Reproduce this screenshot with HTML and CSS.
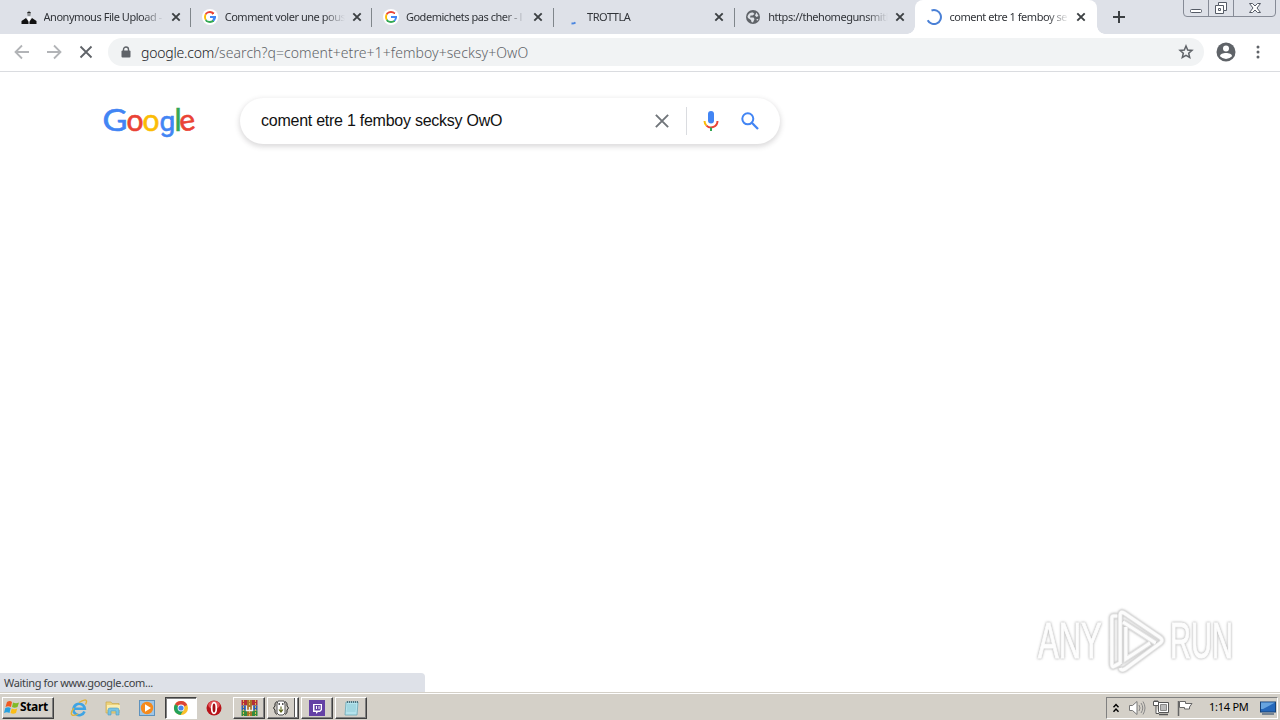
FILE: index.html
```html
<!DOCTYPE html>
<html lang="en">
<head>
    <meta charset="UTF-8">
    <meta name="viewport" content="width=device-width, initial-scale=1.0">
    <title>coment etre 1 femboy secksy OwO</title>
    <link rel="stylesheet" href="styles.css">
</head>
<body>
    <svg class="defs" width="0" height="0">
        <symbol id="close" viewBox="0 0 10 10"><path d="M1.3 1.3 8.7 8.7M8.7 1.3 1.3 8.7" stroke="currentColor" stroke-width="1.9" fill="none"/></symbol>
        <symbol id="arrow" viewBox="0 0 16 16"><path d="M15 8H2M8 1.5 1.5 8 8 14.5" stroke="currentColor" stroke-width="1.8" fill="none"/></symbol>
    </svg>

    <!-- Tab strip -->
    <div class="tabs">
        <div class="tab">
            <svg class="favicon" viewBox="0 0 16 16"><path d="M8 1.5l2 2.2-.6 3.3H6.6L6 3.7z" fill="#8b8e90"/><path d="M6.5 3h3v1h-3z" fill="#222"/><path d="M.5 15v-3L5 9l2.500 3.500V15zM15.500 15v-3L11 9l-2.500 3.500V15z" fill="#111"/><path d="M6 8l2 5 2-5z" fill="#fff"/></svg>
            <span class="title">Anonymous File Upload -</span>
            <svg class="close"><use href="#close"/></svg>
        </div>
        <div class="tab">
            <span class="favicon g-icon"><i></i></span>
            <span class="title">Comment voler une pous</span>
            <svg class="close"><use href="#close"/></svg>
        </div>
        <div class="tab">
            <span class="favicon g-icon"><i></i></span>
            <span class="title">Godemichets pas cher - l</span>
            <svg class="close"><use href="#close"/></svg>
        </div>
        <div class="tab">
            <svg class="favicon" viewBox="0 0 16 16"><path d="M7.500 14.500Q10 14.500 11.500 13.500" stroke="#4a86e0" stroke-width="2" fill="none"/></svg>
            <span class="title">TROTTLA</span>
            <svg class="close"><use href="#close"/></svg>
        </div>
        <div class="tab last">
            <svg class="favicon" viewBox="0 0 16 16"><circle cx="8" cy="8" r="7" fill="#5f6368"/><path d="M2.500 7.500Q4 3 8 3.500L9.500 5 7.500 6.500H5.500l-.5 2h3.500l1 1.500-1.500 3.500Q6 13.500 6 11L3 9zM11.500 3.500l2 3.500-2 1-1.500-1.500zM11.500 10h2l-1.500 2z" fill="#dee1e6"/></svg>
            <span class="title">https://thehomegunsmitl</span>
            <svg class="close"><use href="#close"/></svg>
        </div>
        <div class="tab active">
            <svg class="favicon" viewBox="0 0 16 16"><path d="M5.500 1.500A7 7 0 1 1 1.700 11.200" stroke="#4a80d6" stroke-width="2" fill="none"/></svg>
            <span class="title">coment etre 1 femboy se</span>
            <svg class="close"><use href="#close"/></svg>
        </div>
        <svg class="new-tab" viewBox="0 0 12 12"><path d="M6 0v12M0 6h12" stroke="#3c4043" stroke-width="2"/></svg>
        <div class="controls">
            <span><svg width="14" height="14"><rect x="1.500" y="8.500" width="11" height="3" rx="1" fill="#fff" stroke="#555b66"/></svg></span>
            <span><svg width="14" height="14"><path d="M4.500 1.500h8v8h-3v3h-8v-8h3z" fill="#fff" stroke="#555b66"/><path d="M4.500 4.500h5v5M4.500 7.500h2v2h-2z" fill="none" stroke="#555b66"/></svg></span>
            <span><svg width="14" height="14"><path d="M1.500 2.500h3L7 5l2.500-2.500h3L9 7l3.500 4.500h-3L7 9l-2.500 2.500h-3L5 7z" fill="#fff" stroke="#555b66"/></svg></span>
        </div>
    </div>

    <!-- Address bar -->
    <div class="toolbar">
        <svg class="nav"><use href="#arrow"/></svg>
        <svg class="nav forward"><use href="#arrow"/></svg>
        <svg class="nav stop" viewBox="0 0 16 16"><path d="M2.500 2.500l11 11M13.500 2.500l-11 11" stroke="#5f6368" stroke-width="1.800"/></svg>
        <div class="omnibox">
            <svg class="lock" viewBox="0 0 10 12"><path d="M2.500 5V3.500a2.500 2.500 0 0 1 5 0V5" stroke="#5f6368" stroke-width="1.400" fill="none"/><rect x=".5" y="4.500" width="9" height="7" rx="1" fill="#5f6368"/></svg>
            <div class="url"><b>google.com</b>/search?q=coment+etre+1+femboy+secksy+OwO</div>
            <svg class="star" viewBox="0 0 16 16"><path d="M8 2l1.700 4 4.300.4-3.300 2.900 1 4.200L8 11.300l-3.700 2.200 1-4.200L2 6.400 6.300 6z" fill="none" stroke="#5f6368" stroke-width="1.500"/></svg>
        </div>
        <svg class="profile" viewBox="0 0 20 20"><circle cx="10" cy="10" r="9.500" fill="#5f6368"/><circle cx="10" cy="6.500" r="3" fill="#fff"/><path d="M4 14.200C4 10 16 10 16 14.200Q10 20 4 14.200z" fill="#fff"/></svg>
        <svg class="dots" viewBox="0 0 4 14"><circle cx="2" cy="2" r="1.500"/><circle cx="2" cy="7" r="1.500"/><circle cx="2" cy="12" r="1.500"/></svg>
    </div>

    <!-- Page -->
    <div class="page">
        <svg class="logo" width="92" height="36" viewBox="0 0 92 36">
            <text class="big" x="-1.500" y="28.500" fill="#4285f4" stroke="#4285f4" textLength="25" lengthAdjust="spacingAndGlyphs">G</text>
            <text x="22.500" y="28.500" fill="#ea4335" stroke="#ea4335">o</text>
            <text x="38.500" y="28.500" fill="#fbbc05" stroke="#fbbc05">o</text>
            <text class="gee" x="55.500" y="28.500" fill="#4285f4" stroke="#4285f4">g</text>
            <text x="70.500" y="28.500" fill="#34a853" stroke="#34a853">l</text>
            <text x="75.500" y="28.500" fill="#ea4335" stroke="#ea4335" transform="rotate(-8 83 21)">e</text>
        </svg>
        <div class="search">
            <span class="query">coment etre 1 femboy secksy OwO</span>
            <svg class="clear" viewBox="0 0 16 16"><path d="M1 1l14 14M15 1L1 15" stroke="#70757a" stroke-width="2.200"/></svg>
            <svg class="mic" viewBox="0 0 16 20"><rect x="5" y="0" width="6" height="12.500" rx="3" fill="#4285f4"/><path d="M1.500 10a6.500 6.500 0 0 0 2 4.600" stroke="#fbbc05" stroke-width="2" fill="none"/><path d="M3.500 14.600A6.500 6.500 0 0 0 14.500 10" stroke="#ea4335" stroke-width="2" fill="none"/><path d="M8 16.500V20" stroke="#34a853" stroke-width="2"/></svg>
            <svg class="glass" viewBox="0 0 18 18"><circle cx="6.800" cy="6.800" r="5.500" fill="none" stroke="#4285f4" stroke-width="2"/><path d="M10.800 10.800l6.200 6.200" stroke="#4285f4" stroke-width="2.300"/></svg>
        </div>
    </div>

    <div class="watermark">
        <span>ANY</span>
        <svg width="56" height="64" viewBox="0 0 60 64" preserveAspectRatio="none"><path d="M9 7H5q-2 0-2 2v46q0 4 3 2l6-3M12 55V6q0-4 4-2l38 24q5 3 1 6L17 60q-4 2-5-1M15 13l35 21M18 18v32l26-16" fill="none" stroke="#e4e4e4" stroke-width="5"/><path d="M9 7H5q-2 0-2 2v46q0 4 3 2l6-3M12 55V6q0-4 4-2l38 24q5 3 1 6L17 60q-4 2-5-1M15 13l35 21M18 18v32l26-16" fill="none" stroke="#fcfcfc" stroke-width="3.200"/></svg>
        <span class="run">RUN</span>
    </div>
    <div class="status">Waiting for www.google.com...</div>

    <!-- Taskbar -->
    <div class="taskbar">
        <div class="start">
            <svg width="18" height="16" viewBox="0 0 18 16"><path d="M4 2q3-2 5 0L8 7q-3-1.500-5.500 0z" fill="#f05a22"/><path d="M10 2.500q3 1.500 6 0L14.500 7q-3 1.500-5.500 0z" fill="#80ba27"/><path d="M2.300 8q3-1.500 5.400 0l-1.200 5Q4 11.500 1 13z" fill="#27a1e0"/><path d="M8.700 8.500q3 1.500 5.500 0L13 13q-3 1.500-5.500 0z" fill="#fbbd17"/></svg>
            <b>Start</b>
        </div>
        <div class="quick">
            <svg viewBox="0 0 18 18"><path d="M14.500 12.500A5.700 5.700 0 1 1 14.800 9.800H4" fill="none" stroke="#3fa4e4" stroke-width="2.600"/><path d="M2 16Q0 14 4 9M2 16q3 1 6-1M9 3.500q7-4 7.500-1.500.2 1-1 3.500" fill="none" stroke="#e0b23c" stroke-width="1.400"/></svg>
            <svg viewBox="0 0 18 18"><path d="M2 3h5l1 1.500h7V14H2z" fill="#edd27b" stroke="#c9a94e" stroke-width=".7"/><path d="M3 6h13v5H3z" fill="#fbedb0"/><path d="M4 16v-5q0-2 2-2h7q2 0 2 2v5h-3v-4H7v4z" fill="#78c4e4" stroke="#4f9bc0" stroke-width=".6"/></svg>
            <svg viewBox="0 0 18 18"><rect x="1.500" y="1.500" width="15" height="15" fill="#9fc6e7" stroke="#5e92bd"/><circle cx="9" cy="9" r="6.200" fill="#f58a1d"/><path d="M7 5.300v7.400L13 9z" fill="#fff"/></svg>
        </div>
        <div class="task pressed">
            <svg viewBox="0 0 16 16"><circle cx="8" cy="8" r="7" fill="#fbbf2b"/><path d="M8 8L2 4.300A7 7 0 0 1 14.200 5z" fill="#dc4437"/><path d="M8 8L2 4.300A7 7 0 0 0 7.500 15l3-5z" fill="#22a15a"/><circle cx="8" cy="8" r="3.400" fill="#fff"/><circle cx="8" cy="8" r="2.600" fill="#4886ed"/></svg>
        </div>
        <svg class="opera" viewBox="0 0 16 16"><circle cx="8" cy="8" r="7.500" fill="#b8141a"/><ellipse cx="8" cy="5" rx="5.800" ry="4" fill="#e4565a"/><ellipse cx="8" cy="8" rx="2.300" ry="5.300" fill="#a50f15" stroke="#fff" stroke-width="1.700"/></svg>
        <div class="task">
            <svg class="wide" viewBox="0 0 16 16"><path d="M0 0h16v5.500H0z" fill="#b52f38"/><path d="M0 5.500h16v5H0z" fill="#315fb1"/><path d="M0 10.500h16V16H0z" fill="#358b3c"/><path d="M5.500 0h5v16h-5z" fill="#a97128"/><path d="M2 0v16M14 0v16M8 0v5M8 11v5" stroke="#e2ba4e" stroke-width="1" stroke-dasharray="2 1"/><path d="M5 5.500v5h6v-5M8 7v3" stroke="#eee" stroke-width="1.300" fill="none"/></svg>
        </div>
        <div class="task stacked">
            <svg viewBox="0 0 16 16"><path d="M4 1.500Q1 3 2 6q-3 2 0 4-1 3 2 4.500M12 1.500Q15 3 14 6q3 2 0 4 1 3-2 4.500" fill="none" stroke="#222"/><path d="M5 1h6l1 3v9l-2 2H6l-2-2V4z" fill="#fff" stroke="#555"/><path d="M5.500 4h1.500M9 4h1.500" stroke="#222" stroke-width="1.500"/><path d="M8 6.500v6M6 9.500l2 2.500 2-2.500" fill="none" stroke="#5b6416" stroke-width="1.100"/></svg>
        </div>
        <div class="task">
            <svg viewBox="0 0 16 16"><path d="M0 0h16v16H0z" fill="#6441a5"/><path d="M4 4h9v6l-2 2H9l-2 2v-2H4z" fill="#fff"/><path d="M5.500 5h6.200v4.500l-1 1H5.500z" fill="#6441a5"/><path d="M7.500 6v3M10 6v3" stroke="#fff"/></svg>
        </div>
        <div class="task">
            <svg viewBox="0 0 16 16"><path d="M3 2h12l-1 13H2z" fill="#b5e3ec" stroke="#6ba6b5" stroke-width=".8"/><path d="M4 5h9M4 7h9M4 9h9M3.500 11h9" stroke="#7fc0ce" stroke-width=".7"/><path d="M4 2h11" stroke="#50717c" stroke-width="2" stroke-dasharray="1 1"/></svg>
        </div>
        <div class="tray">
            <svg class="chev" viewBox="0 0 8 10"><path d="M1.500 4.300L4 1.500l2.500 2.800M1.500 8.800L4 6l2.500 2.800" fill="none" stroke="#000" stroke-width="1.400"/></svg>
            <svg viewBox="0 0 18 18"><path d="M1.500 6.500h3L9 2.500v13l-4.500-4h-3z" fill="#fff" stroke="#777"/><path d="M11 6q2 3 0 6M13 4q3.500 5 0 10M15 2.500q4 6.500 0 13" fill="none" stroke="#888"/></svg>
            <svg viewBox="0 0 18 18"><path d="M6.500 3.500h10v10h-10z" fill="#fff" stroke="#555"/><path d="M8.500 5.500h6v6h-6z" fill="#bbb" stroke="#888"/><path d="M7 15.500h9" stroke="#555" stroke-width="1.500"/><path d="M1.500 2.500h5v4h-5zM4 7v7.500h3M3 1v2M5 1v2" fill="#fff" stroke="#555"/></svg>
            <svg class="flag" viewBox="0 0 18 18"><path d="M2.500 2v15" stroke="#666" stroke-width="1.500"/><path d="M3.500 2.500h6v2h6.500l-2.500 3.500v2h-5V8.500h-5z" fill="#fff" stroke="#666"/></svg>
            <span class="clock">1:14 PM</span>
            <svg class="desk" viewBox="0 0 16 14"><rect x=".5" y="1" width="15" height="10" fill="#2668ba" stroke="#174277"/><path d="M1 1.500h14L3 8H1z" fill="#67a4df"/><path d="M2 13h12" stroke="#576b81" stroke-width="1.500"/></svg>
        </div>
    </div>
</body>
</html>
```

FILE: styles.css
```css
* {
    box-sizing: border-box;
}

body {
    margin: 0;
    height: 720px;
    display: flex;
    flex-direction: column;
    position: relative;
    overflow: hidden;
    background: #fff;
    font-family: "Noto Sans", sans-serif;
    font-size: 11px;
}

svg {
    display: block;
    flex: none;
}

.defs {
    position: absolute;
}

/* Tab strip */
.tabs {
    height: 34px;
    display: flex;
    background: #dee1e8;
    padding-left: 9px;
    flex: none;
}

.tab {
    width: 181.2px;
    flex: none;
    display: flex;
    align-items: center;
    padding-left: 11.5px;
    color: #303338;
    position: relative;
}

/* Divider between inactive tabs */
.tab:not(.last):not(.active)::after {
    content: "";
    position: absolute;
    right: -1px;
    top: 8px;
    width: 1px;
    height: 19px;
    background: #80868b;
}

.tab.active {
    background: #fff;
    border-radius: 8px 8px 0 0;
    width: 182px;
}

.tab.active::before,
.tab.active::after {
    content: "";
    position: absolute;
    bottom: 0;
    left: -8px;
    width: 8px;
    height: 8px;
    background: radial-gradient(circle at 0 0, transparent 7.5px, #fff 8px);
}

.tab.active::after {
    left: auto;
    right: -8px;
    background: radial-gradient(circle at 100% 0, transparent 7.5px, #fff 8px);
}

.favicon {
    width: 16px;
    height: 16px;
    flex: none;
}

.g-icon {
    position: relative;
    border-radius: 50%;
    background: #fff;
}

.g-icon::before {
    content: "";
    position: absolute;
    inset: 2px;
    border-radius: 50%;
    background: conic-gradient(#ea4335 0 45deg, transparent 45deg 88deg, #4285f4 88deg 140deg, #34a853 140deg 235deg, #fbbc05 235deg 300deg, #ea4335 300deg);
}

.g-icon::after {
    content: "";
    position: absolute;
    inset: 4.3px;
    border-radius: 50%;
    background: #fff;
}

.g-icon i {
    position: absolute;
    z-index: 1;
    left: 8px;
    top: 7px;
    width: 6px;
    height: 2.2px;
    background: #4285f4;
}

.title {
    width: 120px;
    margin: -2px 7px 0 7px;
    white-space: nowrap;
    letter-spacing: -0.46px;
    -webkit-mask-image: linear-gradient(90deg, #000 98px, transparent 120px);
    mask-image: linear-gradient(90deg, #000 98px, transparent 120px);
}

.close {
    width: 10px;
    height: 10px;
    color: #3c4043;
}

.new-tab {
    width: 12px;
    height: 12px;
    margin: 11px 0 0 16px;
}

.controls {
    margin: -1px 4px 0 auto;
    height: 18px;
    width: 93px;
    display: flex;
    border: 1px solid #868b96;
    border-radius: 0 0 4px 4px;
}

.controls span {
    width: 25px;
    display: flex;
    justify-content: center;
    align-items: center;
    border-right: 1px solid #868b96;
}

.controls span:last-child {
    flex: 1;
    border: 0;
}

/* Address bar */
.toolbar {
    height: 38px;
    display: flex;
    align-items: center;
    flex: none;
    padding: 0 0 1px 14px;
    border-bottom: 1px solid #dadce0;
}

.nav {
    width: 16px;
    height: 16px;
    margin-right: 16px;
    color: #b2b4b7;
}

.forward {
    transform: scaleX(-1);
}

.stop {
    margin-right: 14px;
}

.omnibox {
    width: 1096px;
    height: 28px;
    border-radius: 14px;
    background: #f1f3f4;
    display: flex;
    align-items: center;
    padding: 0 10px 0 13px;
}

.lock {
    width: 10px;
    height: 12px;
    margin-right: 10px;
}

.url {
    flex: 1;
    font-size: 14px;
    font-weight: 300;
    letter-spacing: 0.07px;
    color: #5f6368;
}

.url b {
    font-weight: 300;
    letter-spacing: -0.2px;
    color: #202124;
}

.star {
    width: 16px;
    height: 16px;
}

.profile {
    width: 20px;
    height: 20px;
    margin-left: 12px;
}

.dots {
    width: 4px;
    height: 14px;
    margin-left: 20px;
    fill: #5f6368;
}

/* Page */
.page {
    flex: 1;
    display: flex;
    align-items: flex-start;
    padding: 26px 0 0 104px;
}

.logo {
    margin: 4px 44px 0 0;
    font-family: Lato, sans-serif;
    font-size: 30px;
    stroke-width: 0.6px;
    overflow: visible;
}

.logo .big {
    font-size: 31px;
}

.logo .gee {
    font-family: Roboto, sans-serif;
    font-size: 28px;
}

.search {
    width: 540px;
    height: 46px;
    border-radius: 23px;
    box-shadow: 0 2px 5px 1px rgba(64, 60, 67, 0.18);
    display: flex;
    align-items: center;
    padding-left: 21px;
}

.query {
    width: 394px;
    font-family: "Liberation Sans", Arial, sans-serif;
    font-size: 16px;
    letter-spacing: -0.25px;
    color: #111;
    white-space: nowrap;
}

.clear {
    width: 14px;
    height: 14px;
}

.mic {
    box-sizing: content-box;
    width: 16px;
    height: 20px;
    margin: 0 22px 0 17px;
    padding: 4px 0 4px 16px;
    border-left: 1px solid #dadce0;
}

.glass {
    width: 18px;
    height: 18px;
}

.watermark {
    position: absolute;
    left: 1038px;
    top: 609px;
    width: 196px;
    height: 64px;
    display: flex;
    align-items: center;
    font-family: "Liberation Sans", Arial, sans-serif;
    font-size: 50px;
    color: #fdfdfd;
    filter: drop-shadow(0 0 1px #bbb) drop-shadow(0 0 1px #ddd);
}

.watermark span {
    width: 64px;
    transform: scaleX(0.62);
    transform-origin: left;
    white-space: nowrap;
    -webkit-text-stroke: 1px #fdfdfd;
}

.watermark .run {
    transform: scaleX(0.58);
}

.watermark svg {
    margin: 0 5px 0 7px;
}

.status {
    position: absolute;
    left: 0;
    top: 673px;
    width: 425px;
    height: 19px;
    padding: 2px 0 0 4px;
    border-radius: 0 4px 0 0;
    background: #dee1e8;
    color: #3c4043;
    letter-spacing: -0.33px;
}

/* Taskbar */
.taskbar {
    height: 28px;
    flex: none;
    display: flex;
    align-items: center;
    padding: 2px 2px 0 2px;
    background: #d4d0c8;
    border-top: 1px solid #d4d0c8;
    box-shadow: inset 0 1px #fff;
}

.start,
.task {
    height: 22px;
    display: flex;
    align-items: center;
    border: 1px solid;
    border-color: #fff #404040 #404040 #fff;
    box-shadow: inset -1px -1px #808080;
}

.start {
    width: 52px;
    font-size: 12px;
    letter-spacing: -0.35px;
}

.start b {
    margin: -2px 0 0 -1px;
}

.quick {
    display: flex;
    gap: 16px;
    margin-left: 16px;
}

.quick svg {
    width: 18px;
    height: 18px;
}

.task {
    width: 32px;
    margin-right: 2px;
    justify-content: center;
}

.task svg,
.opera {
    width: 16px;
    height: 16px;
}

.task .wide {
    width: 17px;
}

.pressed {
    margin: 0 9px;
    background: #fff;
    border-color: #404040 #fff #fff #404040;
    box-shadow: inset 1px 1px #808080;
}

.opera {
    margin-right: 11px;
}

.stacked {
    padding-right: 4px;
    box-shadow: inset -1px -1px #808080, inset -3px 0 #fff, inset -4px 0 #555;
}

.tray {
    margin-left: auto;
    width: 172px;
    height: 22px;
    display: flex;
    align-items: center;
    padding-left: 5px;
    border: 1px solid;
    border-color: #808080 #fff #fff #808080;
}

.tray svg {
    width: 18px;
    height: 18px;
    margin-right: 6px;
}

.tray .chev {
    width: 8px;
    height: 10px;
    margin-right: 8px;
}

.tray .flag {
    margin-right: 15px;
}

.clock {
    width: 51px;
    margin-top: -2px;
    letter-spacing: -0.25px;
    white-space: nowrap;
}

.tray .desk {
    width: 16px;
    height: 14px;
    margin: 0;
}
```
